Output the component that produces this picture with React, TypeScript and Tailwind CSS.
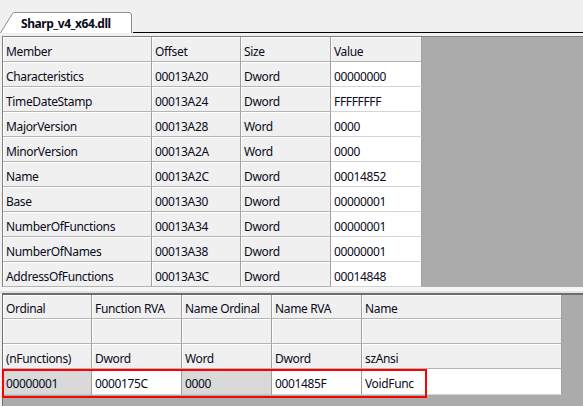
import type { ReactNode } from "react";
import clsx from "clsx";

const TOP_COLS = ["w-[149px]", "w-[89px]", "w-[90px]", "w-[91px]"];
const BOTTOM_COLS = ["w-[89px]", "w-[90px]", "w-[90px]", "w-[90px]", "w-[200px]"];

const MEMBERS = [
  ["Characteristics", "00013A20", "Dword", "00000000"],
  ["TimeDateStamp", "00013A24", "Dword", "FFFFFFFF"],
  ["MajorVersion", "00013A28", "Word", "0000"],
  ["MinorVersion", "00013A2A", "Word", "0000"],
  ["Name", "00013A2C", "Dword", "00014852"],
  ["Base", "00013A30", "Dword", "00000001"],
  ["NumberOfFunctions", "00013A34", "Dword", "00000001"],
  ["NumberOfNames", "00013A38", "Dword", "00000001"],
  ["AddressOfFunctions", "00013A3C", "Dword", "00014848"],
];

const EXPORT_HEAD = [
  ["Ordinal", "Function RVA", "Name Ordinal", "Name RVA", "Name"],
  ["", "", "", "", ""],
  ["(nFunctions)", "Dword", "Word", "Dword", "szAnsi"],
];

const EXPORT_ROW = ["00000001", "0000175C", "0000", "0001485F", "VoidFunc"];
const EXPORT_TONES: Tone[] = ["sel", "white", "sel", "white", "white"];

type Tone = "fixed" | "white" | "sel";

function Cell({ w, tone, children }: { w: string; tone: Tone; children?: ReactNode }) {
  return (
    <div
      className={clsx(
        "flex h-full items-center overflow-hidden whitespace-nowrap border-r border-b pl-[3px] pt-[5px]",
        w,
        tone === "fixed" && "border-r-[#a0a0a0] border-b-[#b4b4b4] bg-[#f0f0f0] shadow-[inset_1px_1px_0_#ffffff]",
        tone === "white" && "border-r-[#a0a0a0] border-b-[#d4d4d4] bg-white",
        tone === "sel" && "border-r-[#a0a0a0] border-b-[#c4c4c4] bg-[#d9d9d9]",
      )}
    >
      {children}
    </div>
  );
}

function Tab() {
  return (
    <div className="flex h-[33px] items-end">
      <div className="relative flex h-[21px] w-[133px] items-center pl-[21px] pt-[2px] text-[12px] font-bold tracking-[-0.45px]">
        <svg className="absolute inset-0" width="133" height="21" viewBox="0 0 133 21">
          <path
            d="M0.5 21 L12.5 1.5 Q13.2 0.5 15 0.5 L129 0.5 Q131.5 0.5 131.5 3 L131.5 21"
            fill="#ffffff"
            stroke="#8e8f93"
          />
        </svg>
        <span className="relative">Sharp_v4_x64.dll</span>
      </div>
      <div className="h-full flex-1 border-b border-black" />
    </div>
  );
}

export default function App() {
  return (
    <div className="flex h-[406px] w-[583px] flex-col overflow-hidden bg-[#f0f0f0] font-['Noto_Sans',sans-serif] text-[12px] leading-none tracking-[-0.35px] text-[#0a0a1a]">
      <Tab />
      <div className="h-[3px]" />

      {/* header members */}
      <div className="ml-[2px] flex h-[251px] border-l border-t border-[#808080]">
        <div className="flex w-[419px] flex-col">
          <div className="flex h-[25px]">
            {["Member", "Offset", "Size", "Value"].map((h, i) => (
              <Cell key={h} w={TOP_COLS[i]} tone="fixed">
                {h}
              </Cell>
            ))}
          </div>
          {MEMBERS.map((row) => (
            <div key={row[0]} className="flex h-[25px]">
              {row.map((v, i) => (
                <Cell key={i} w={TOP_COLS[i]} tone={i === 3 ? "white" : "fixed"}>
                  {v}
                </Cell>
              ))}
            </div>
          ))}
        </div>
        <div className="flex-1 bg-[#ababab]" />
      </div>

      {/* splitter */}
      <div className="h-[6px] border-b-2 border-[#e3e3e3] bg-[#f7f7f7]" />

      {/* export functions */}
      <div className="relative ml-[2px] flex flex-1 border-l border-t-2 border-[#6d6d6d]">
        <div className="flex w-[559px] flex-col bg-[#ababab]">
          {EXPORT_HEAD.map((row, r) => (
            <div key={r} className={clsx("flex", r === 0 ? "h-[24px]" : "h-[25px]")}>
              {row.map((v, i) => (
                <Cell key={i} w={BOTTOM_COLS[i]} tone="fixed">
                  {v}
                </Cell>
              ))}
            </div>
          ))}
          <div className="flex h-[26px]">
            {EXPORT_ROW.map((v, i) => (
              <Cell key={i} w={BOTTOM_COLS[i]} tone={EXPORT_TONES[i]}>
                {v}
              </Cell>
            ))}
          </div>
        </div>
        <div className="flex-1 bg-[#ababab]" />
        <div className="absolute -left-px top-[74px] h-[29px] w-[425px] border-2 border-[#ff0000]" />
      </div>
    </div>
  );
}
